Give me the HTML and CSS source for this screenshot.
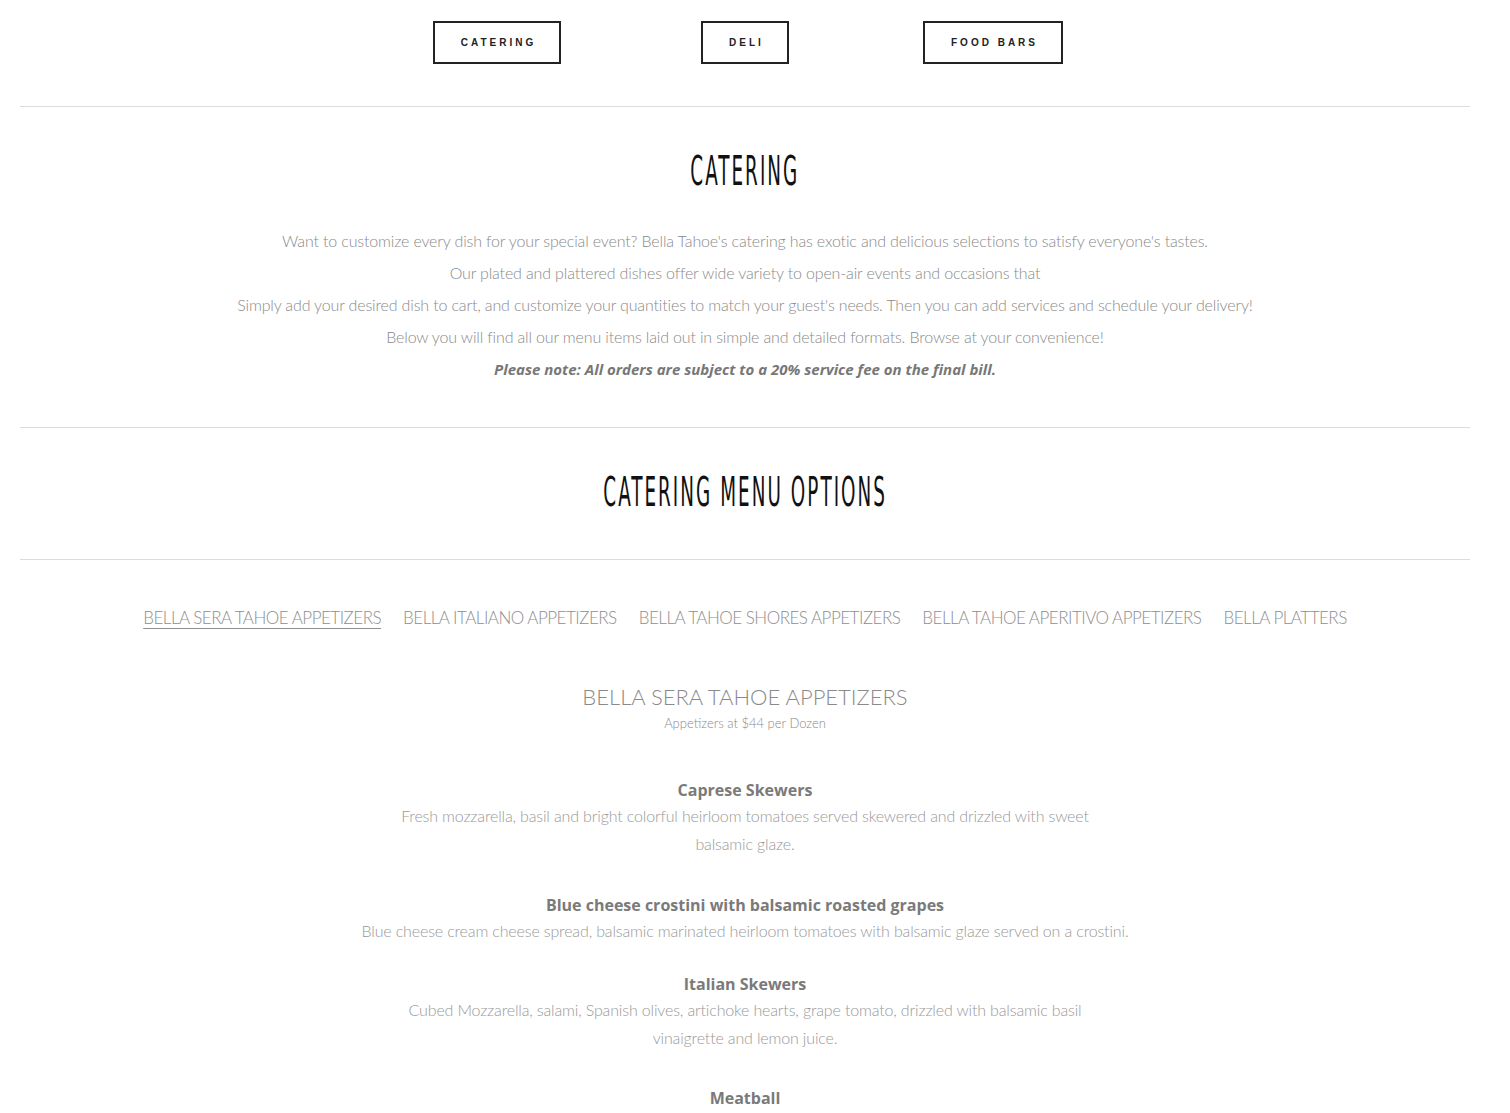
FILE: index.html
```html
<!DOCTYPE html>
<html lang="en">
<head>
<meta charset="utf-8">
<title>Catering</title>
<link rel="stylesheet" href="styles.css">
</head>
<body>
<div class="page">
  <nav class="top-nav">
    <div class="nav-cell"><a class="nav-btn" href="#">CATERING</a></div>
    <div class="nav-cell"><a class="nav-btn" href="#">DELI</a></div>
    <div class="nav-cell"><a class="nav-btn" href="#">FOOD BARS</a></div>
  </nav>
  <hr class="rule rule-first">
  <section class="intro">
    <h1 class="display"><span class="display-text">CATERING</span></h1>
    <div class="intro-text">
      <p>Want to customize every dish for your special event? Bella Tahoe's catering has exotic and delicious selections to satisfy everyone's tastes.</p>
      <p>Our plated and plattered dishes offer wide variety to open-air events and occasions that</p>
      <p>Simply add your desired dish to cart, and customize your quantities to match your guest's needs. Then you can add services and schedule your delivery!</p>
      <p>Below you will find all our menu items laid out in simple and detailed formats. Browse at your convenience!</p>
      <p class="note">Please note: All orders are subject to a 20% service fee on the final bill.</p>
    </div>
  </section>
  <hr class="rule rule-second">
  <h2 class="display display-sub"><span class="display-text">CATERING MENU OPTIONS</span></h2>
  <hr class="rule rule-third">
  <ul class="tabs">
    <li class="tab active">BELLA SERA TAHOE APPETIZERS</li>
    <li class="tab">BELLA ITALIANO APPETIZERS</li>
    <li class="tab">BELLA TAHOE SHORES APPETIZERS</li>
    <li class="tab">BELLA TAHOE APERITIVO APPETIZERS</li>
    <li class="tab">BELLA PLATTERS</li>
  </ul>
  <section class="menu">
    <h3 class="menu-title">BELLA SERA TAHOE APPETIZERS</h3>
    <div class="menu-sub">Appetizers at $44 per Dozen</div>
    <div class="item item-first">
      <div class="item-name">Caprese Skewers</div>
      <div class="item-desc">Fresh mozzarella, basil and bright colorful heirloom tomatoes served skewered and drizzled with sweet<br>balsamic glaze.</div>
    </div>
    <div class="item item-wide">
      <div class="item-name">Blue cheese crostini with balsamic roasted grapes</div>
      <div class="item-desc">Blue cheese cream cheese spread, balsamic marinated heirloom tomatoes with balsamic glaze served on a crostini.</div>
    </div>
    <div class="item item-tight">
      <div class="item-name">Italian Skewers</div>
      <div class="item-desc">Cubed Mozzarella, salami, Spanish olives, artichoke hearts, grape tomato, drizzled with balsamic basil<br>vinaigrette and lemon juice.</div>
    </div>
    <div class="item item-last">
      <div class="item-name">Meatball</div>
    </div>
  </section>
</div>
</body>
</html>
```

FILE: styles.css
```css
html, body {
  margin: 0;
  padding: 0;
  background: #ffffff;
}
body {
  font-family: "Lato", "Open Sans", sans-serif;
  font-weight: 300;
  color: #8a8a8a;
}
.page {
  width: 1450px;
  padding: 0 20px;
}
.top-nav {
  display: grid;
  grid-template-columns: repeat(3, 248px);
  justify-content: center;
  padding-top: 21px;
}
.nav-cell {
  display: flex;
  justify-content: center;
}
.nav-btn {
  display: inline-block;
  box-sizing: border-box;
  height: 43px;
  line-height: 39px;
  padding: 0 23px 0 26px;
  border: 2px solid #222222;
  font-family: "Liberation Sans", Arial, sans-serif;
  font-size: 10px;
  font-weight: 700;
  letter-spacing: 3px;
  color: #222222;
  text-decoration: none;
}
.rule {
  border: 0;
  border-top: 1px solid #dcdcdc;
  margin: 0;
}
.rule-first {
  margin-top: 42px;
}
.display {
  margin: 0;
  text-align: center;
  font-family: "Liberation Sans Narrow", "DejaVu Sans Condensed", sans-serif;
  font-weight: 400;
  font-size: 40px;
  line-height: 48px;
  color: #111111;
  letter-spacing: 4px;
}
.display-text {
  display: inline-block;
  transform: scaleX(0.51);
}
.intro h1 {
  margin-top: 40px;
}
.intro-text {
  margin-top: 30px;
  text-align: center;
  font-size: 16px;
  letter-spacing: -0.15px;
}
.intro-text p {
  margin: 0;
  line-height: 32px;
}
.intro-text .note {
  font-family: "Open Sans", sans-serif;
  font-weight: 700;
  font-style: italic;
  font-size: 15px;
  letter-spacing: 0;
  color: #777777;
}
.rule-second {
  margin-top: 42px;
}
.display-sub {
  margin-top: 40px;
  margin-bottom: 43px;
}
.tabs {
  list-style: none;
  margin: 40px 0 0;
  padding: 0;
  display: flex;
  justify-content: center;
  gap: 22px;
  font-size: 17px;
  letter-spacing: -0.5px;
  line-height: 36px;
  color: #8e8e8e;
}
.tab.active {
  text-decoration: underline;
  text-underline-offset: 4px;
  text-decoration-thickness: 1px;
}
.menu {
  text-align: center;
  margin-top: 46px;
}
.menu-title {
  margin: 0;
  font-weight: 300;
  font-size: 22px;
  line-height: 30px;
  color: #8a8a8a;
}
.menu-sub {
  font-size: 13px;
  line-height: 22px;
  margin-top: 0;
}
.item-name {
  font-family: "Open Sans", sans-serif;
  font-weight: 700;
  font-size: 16px;
  line-height: 24px;
  color: #7a7a7a;
}
.item-desc {
  font-size: 16px;
  line-height: 28px;
  letter-spacing: -0.15px;
  color: #999999;
}
.item-first {
  margin-top: 44px;
}
.item-wide {
  margin-top: 35px;
}
.item-tight {
  margin-top: 27px;
}
.item-last {
  margin-top: 34px;
}
```
